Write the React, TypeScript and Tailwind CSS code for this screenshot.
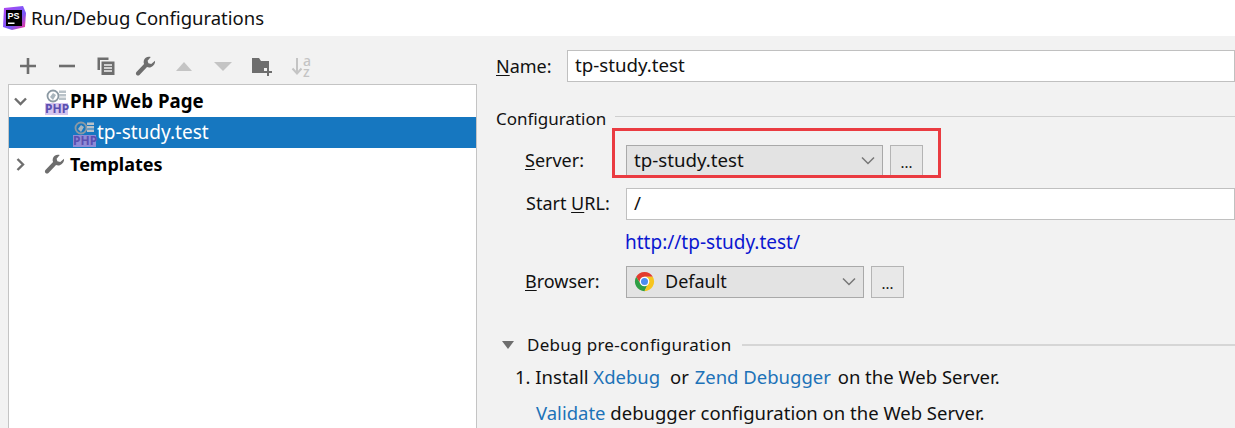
import { FC, ReactNode } from 'react';

const PsLogo: FC = () => (
  <svg width="24" height="24" viewBox="0 0 24 24">
    <defs>
      <linearGradient id="psg" x1="0" y1="0" x2="1" y2="1">
        <stop offset="0" stopColor="#b345f1" />
        <stop offset="0.6" stopColor="#765af8" />
        <stop offset="1" stopColor="#ff318c" />
      </linearGradient>
    </defs>
    <path d="M2 2 L21 0 L24 7 L23 21 L10 24 L1 21 Z" fill="url(#psg)" />
    <rect x="4" y="4" width="16" height="16" fill="#000" />
    <rect x="6" y="16.500" width="6.500" height="1.500" fill="#fff" />
    <text x="5.500" y="13" fontSize="9" fontWeight="700" fill="#fff" fontFamily="'Liberation Sans', sans-serif">PS</text>
  </svg>
);

const PhpIcon: FC<{ dark?: boolean }> = ({ dark }) => (
  <div className="relative w-[23px] h-[26px] shrink-0">
    <svg width="23" height="14" viewBox="0 0 23 14" className="absolute top-0 left-0">
      <circle cx="8" cy="7" r="5.500" fill="none" stroke="#8b99a3" strokeWidth="1.800" />
      <path d="M5 8 L8 4 L11 6 L8 11 Z" fill="#a9b5bd" />
      <rect x="14" y="1.500" width="7" height="2.500" fill="#b9c2c8" />
      <rect x="14" y="5" width="7" height="2.500" fill="#b9c2c8" />
      <rect x="14" y="8.500" width="7" height="2.500" fill="#b9c2c8" />
    </svg>
    <div className={`absolute bottom-0 left-0 w-[23px] h-[12px] text-[12px] leading-[12px] font-bold text-center text-[#5a4fb0] ${dark ? 'bg-[#8f8ad6]' : 'bg-[#d5c4ee]'}`}>
      PHP
    </div>
  </div>
);

const Wrench: FC<{ color?: string }> = ({ color = '#6e6e6e' }) => (
  <svg width="21" height="21" viewBox="0 0 22 22">
    <path d="M21 5 L17 8.500 L14 7.600 L13.200 5 L16.500 1 C13.500 0 10 1.500 9.200 5 C8.900 6.200 9 7.400 9.500 8.400 L1.500 16.800 C0.700 17.700 0.800 19 1.600 19.800 C2.500 20.700 3.900 20.700 4.700 19.800 L12.600 11.600 C14 12.200 15.600 12.200 17 11.500 C19.400 10.300 21.500 8 21 5 Z" fill={color} />
  </svg>
);

const Toolbar: FC = () => (
  <div className="h-[48px] pt-[12px] pl-[18px] flex items-center gap-[19px]">
    <svg width="20" height="20" viewBox="0 0 20 20" className="shrink-0"><path d="M10 2v16M2 10h16" stroke="#6e6e6e" strokeWidth="2.600" /></svg>
    <svg width="20" height="20" viewBox="0 0 20 20" className="shrink-0"><path d="M2 10h16" stroke="#6e6e6e" strokeWidth="2.600" /></svg>
    <svg width="20" height="20" viewBox="0 0 20 20" className="shrink-0">
      <path d="M1.500 1.500h11v2.500h-8.500v10h-2.500z" fill="#6e6e6e" />
      <path d="M5.500 5.500h13v13.500h-13z" fill="#6e6e6e" />
      <path d="M8 9h8M8 12h8M8 15h8" stroke="#f2f2f2" strokeWidth="1.400" />
    </svg>
    <div className="w-[20px] shrink-0"><Wrench /></div>
    <svg width="20" height="20" viewBox="0 0 20 20" className="shrink-0"><path d="M2 15 L10 6 L18 15 Z" fill="#c4c4c4" /></svg>
    <svg width="20" height="20" viewBox="0 0 20 20" className="shrink-0"><path d="M1 6 L19 6 L10 15 Z" fill="#c4c4c4" /></svg>
    <svg width="20" height="22" viewBox="0 0 20 22" className="shrink-0">
      <path d="M0 3h7l2 3h8v7h-5v5H0z" fill="#6e6e6e" />
      <path d="M16 13v8M12 17h8" stroke="#6e6e6e" strokeWidth="2" />
    </svg>
    <div className="relative w-[20px] h-[22px] shrink-0">
      <svg width="12" height="22" viewBox="0 0 12 22" className="absolute left-0 top-0"><path d="M6 3v15M1.500 13.500L6 18.500l4.500-5" fill="none" stroke="#c4c4c4" strokeWidth="2" /></svg>
      <span className="absolute left-[12px] top-0 text-[14px] leading-[11px] font-medium text-[#c4c4c4]">a<br />z</span>
    </div>
  </div>
);

const Tree: FC = () => (
  <div className="ml-2 flex-1 bg-white border-t border-l border-r border-[#c4c4c4]">
    <div className="h-[32px] flex items-center pl-[5px]">
      <svg width="13" height="9" viewBox="0 0 13 9" className="shrink-0"><path d="M1 1.500 L6.500 7 L12 1.500" fill="none" stroke="#6e6e6e" strokeWidth="2.400" /></svg>
      <div className="ml-[18px] mt-[2px]"><PhpIcon /></div>
      <span className="ml-[2px] text-[18.7px] font-bold text-black">PHP Web Page</span>
    </div>
    <div className="h-[31px] flex items-center pl-[64px] bg-[#1677c0]">
      <div className="mt-[3px]"><PhpIcon dark /></div>
      <span className="ml-[1px] text-[19px] text-white">tp-study.test</span>
    </div>
    <div className="h-[32px] flex items-center pl-[7px]">
      <svg width="9" height="13" viewBox="0 0 9 13" className="shrink-0"><path d="M1.500 1 L7 6.500 L1.500 12" fill="none" stroke="#6e6e6e" strokeWidth="2.400" /></svg>
      <div className="ml-[19px]"><Wrench /></div>
      <span className="ml-[5px] text-[18px] font-bold text-black">Templates</span>
    </div>
  </div>
);

const Label: FC<{ className?: string; children: ReactNode }> = ({ className, children }) => (
  <div className={`text-[18px] text-[#111] ${className ?? ''}`}>{children}</div>
);

const TextBox: FC<{ value: string }> = ({ value }) => (
  <div className="flex-1 h-[32px] bg-white border border-[#c0c0c0] pl-[7px] text-[18.7px] leading-[28px] text-[#111]">{value}</div>
);

const Select: FC<{ width: string; children: ReactNode }> = ({ width, children }) => (
  <div className="flex gap-[7px] items-center">
    <div className={`${width} h-[32px] bg-[#e3e3e3] border border-[#a9a9a9] flex items-center pl-[7px] pr-[7px]`}>
      <div className="flex-1 flex items-center text-[18.7px] text-[#111]">{children}</div>
      <svg width="14" height="9" viewBox="0 0 14 9"><path d="M1 1.500 L7 7.500 L13 1.500" fill="none" stroke="#777" strokeWidth="1.500" /></svg>
    </div>
    <div className="w-[33px] h-[32px] bg-[#e8e8e8] border border-[#b4b4b4] text-center text-[15px] leading-[32px] text-[#111]">...</div>
  </div>
);

const ChromeIcon: FC = () => (
  <svg width="21" height="21" viewBox="0 0 24 24" className="mr-[10px]">
    <path d="M12 1 A11 11 0 0 1 21.500 6.500 L12 6.500 Z M12 1 A11 11 0 0 0 2.500 6.500 L7 14 L12 7 Z" fill="#e33b2e" />
    <path d="M2.500 6.500 A11 11 0 0 0 12 23 L16 15 L7 14 Z" fill="#2f9e44" />
    <path d="M21.500 6.500 A11 11 0 0 1 12 23 L17 12 L12 6.500 Z" fill="#f7c51e" />
    <circle cx="12" cy="12" r="5.500" fill="#fff" />
    <circle cx="12" cy="12" r="4" fill="#4b8df0" />
  </svg>
);

const App: FC = () => {
  return (
    <div className="relative w-[1235px] h-[428px] overflow-hidden flex flex-col bg-[#f2f2f2] font-['Noto_Sans','Open_Sans',sans-serif]">
      <div className="h-[36px] bg-white flex items-center pl-[2px] gap-[5px] shrink-0">
        <PsLogo />
        <span className="text-[18.500px] text-[#111]">Run/Debug Configurations</span>
      </div>
      <div className="flex flex-1 min-h-0">
        <div className="w-[477px] shrink-0 flex flex-col">
          <Toolbar />
          <Tree />
        </div>
        <div className="flex-1 min-w-0">
          <div className="mt-[14px] flex items-center">
            <Label className="w-[71px] ml-[19px] text-[18.300px]"><span className="underline underline-offset-2">N</span>ame:</Label>
            <TextBox value="tp-study.test" />
          </div>
          <div className="mt-[24px] ml-[19px] flex items-center gap-[9px]">
            <span className="text-[17px] text-[#111]">Configuration</span>
            <div className="flex-1 h-px bg-[#cfcfcf] mt-[-4px]" />
          </div>
          <div className="mt-[13px] flex items-center">
            <Label className="w-[101px] ml-[48px]"><span className="underline underline-offset-2">S</span>erver:</Label>
            <Select width="w-[257px]">tp-study.test</Select>
          </div>
          <div className="mt-[11px] flex items-center">
            <Label className="w-[100px] ml-[49px]">Start <span className="underline underline-offset-2">U</span>RL:</Label>
            <TextBox value="/" />
          </div>
          <div className="mt-[8px] ml-[148px] text-[19px] leading-[28px] text-[#0b17d0]">http://tp-study.test/</div>
          <div className="mt-[10px] flex items-center">
            <Label className="w-[101px] ml-[48px]"><span className="underline underline-offset-2">B</span>rowser:</Label>
            <Select width="w-[238px]"><ChromeIcon /><span className="text-[18px]">Default</span></Select>
          </div>
          <div className="mt-[33px] ml-[24px] flex items-center">
            <svg width="14" height="10" viewBox="0 0 14 10"><path d="M1 1h12L7 9z" fill="#6e6e6e" /></svg>
            <span className="ml-[12px] text-[17px] leading-[28px] tracking-[0.3px] text-[#111]">Debug pre-configuration</span>
            <div className="ml-[10px] flex-1 h-[2px] bg-[#d6d6d6]" />
          </div>
          <div className="mt-[4px] ml-[38px] text-[18.500px] leading-[28px] text-[#111] whitespace-nowrap">
            1. Install <a className="text-[#1d72b8]">Xdebug</a> <span className="ml-[5px]">or</span> <a className="ml-[1px] text-[#1d72b8]">Zend Debugger</a> <span className="ml-[2px]">on the Web Server.</span>
          </div>
          <div className="mt-[8px] ml-[59px] text-[18.500px] leading-[28px] text-[#111] whitespace-nowrap">
            <a className="text-[#1d72b8]">Validate</a> debugger configuration on the Web Server.
          </div>
        </div>
      </div>
      {/* annotation drawn over the screenshot */}
      <div className="absolute left-[612px] top-[128px] w-[329px] h-[50px] border-[3px] border-[#ea3b41]" />
    </div>
  );
};

export default App;
